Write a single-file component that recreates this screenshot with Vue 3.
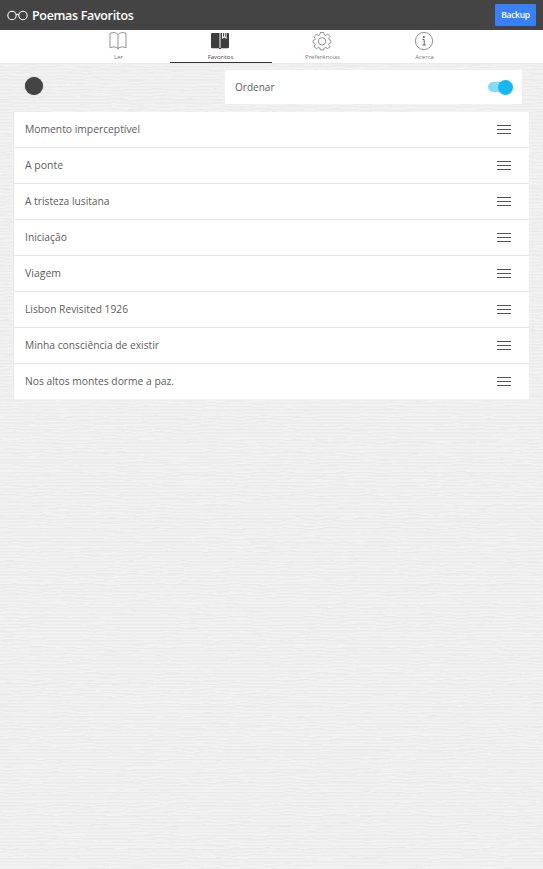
<script setup>
import { ref } from 'vue'

const sorting = ref(true)
const active = ref('Favoritos')
const tabs = ['Ler', 'Favoritos', 'Preferências', 'Acerca']
const poems = [
  { title: 'Momento imperceptível', width: 115 },
  { title: 'A ponte', width: 38 },
  { title: 'A tristeza lusitana', width: 84.5 },
  { title: 'Iniciação', width: 42 },
  { title: 'Viagem', width: 36 },
  { title: 'Lisbon Revisited 1926', width: 103 },
  { title: 'Minha consciência de existir', width: 134 },
  { title: 'Nos altos montes dorme a paz.', width: 149 },
]
</script>

<template>
  <div class="page">
    <svg class="texture" width="100%" height="100%" aria-hidden="true">
      <defs>
        <pattern id="lines" width="20" height="3.300" patternUnits="userSpaceOnUse">
          <rect width="20" height="3.300" fill="#f2f2f2" />
          <rect width="20" height="1.300" fill="#eaeaea" />
        </pattern>
        <filter id="paper" x="0" y="0" width="100%" height="100%" color-interpolation-filters="sRGB">
          <feTurbulence type="fractalNoise" baseFrequency="0.04 0.13" numOctaves="2" seed="8" result="noise" />
          <feDisplacementMap in="SourceGraphic" in2="noise" scale="4" xChannelSelector="R" yChannelSelector="G" />
        </filter>
      </defs>
      <rect y="-10" width="100%" height="900" fill="url(#lines)" filter="url(#paper)" />
    </svg>

    <header class="header">
      <svg class="glasses" viewBox="0 0 21 11" width="21" height="11">
        <circle cx="5" cy="5.5" r="4.2" /><circle cx="16" cy="5.5" r="4.2" />
        <path d="M9 4.7q1.5-1 3 0" />
      </svg>
      <h1>Poemas Favoritos</h1>
      <button class="backup">Backup</button>
    </header>

    <nav class="tabs">
      <a v-for="tab in tabs" :key="tab" class="tab" :class="{ active: active === tab }" @click="active = tab">
        <svg v-if="tab === 'Ler'" class="icon" viewBox="0 0 20 20">
          <path d="M10 3.7C8.500 1.300 4.500 1 2 2.400v14.400c2.500-1.400 6.500-1 8 .7 1.500-1.700 5.500-2.100 8-.7V2.400C15.500 1 11.500 1.300 10 3.700zV18.500" />
        </svg>
        <svg v-else-if="tab === 'Favoritos'" class="icon solid" viewBox="0 0 20 20">
          <path d="M2 2h7.500v15.300H2q-1-.1-1-1V3q0-1 1-1zM10.500 2H12v6l2.300-1.500L16.600 8V2H18q1 0 1 1v13.300q0 1-1 1h-7.500z" />
          <path d="M13 2h.9v3.400l-.9.600zM14.800 2h.9v4l-.9-.6zM9 17h2v1H9z" />
        </svg>
        <svg v-else-if="tab === 'Preferências'" class="icon" viewBox="0 0 20 20">
          <path d="M8.300 1.500h3.400l.5 2.400 1.400.6 2-1.300L18 5.600l-1.300 2 .6 1.300 1.500.3v2.700l-1.500.4-.6 1.400L18 15.700 15.600 17.600l-2-1.200-1.400.6-.5 1.900H8.300l-.5-1.900-1.400-.6-2 1.200L2 15.700l1.300-2-.6-1.400-1.500-.4V9.200L2.700 8.900 3.300 7.600 2 5.600l2.400-2.400 2 1.300 1.400-.6z" />
          <circle cx="10" cy="10.300" r="3.700" />
        </svg>
        <svg v-else class="icon" viewBox="0 0 20 20">
          <circle cx="10" cy="10" r="8.600" />
          <path class="letter" d="M8.500 8.500h1.700v5.500M8.300 14h3.600" />
          <circle class="dot" cx="9.900" cy="6" r=".9" />
        </svg>
        <span>{{ tab }}</span>
      </a>
    </nav>

    <section class="toolbar">
      <i class="disc"></i>
      <div class="sort">
        <svg class="title" height="20" width="60">
          <text x="0" y="14" textLength="39.500" lengthAdjust="spacingAndGlyphs">Ordenar</text>
        </svg>
        <button class="switch" :class="{ on: sorting }" aria-label="Ordenar" @click="sorting = !sorting"><i></i></button>
      </div>
    </section>

    <ul class="list">
      <li v-for="poem in poems" :key="poem.title">
        <svg class="title" height="20" width="260">
          <text x="0" y="13" :textLength="poem.width" lengthAdjust="spacingAndGlyphs">{{ poem.title }}</text>
        </svg>
        <svg class="handle" viewBox="0 0 14 10" width="14" height="10">
          <path d="M0 .5h14M0 4.500h14M0 8.500h14" />
        </svg>
      </li>
    </ul>
  </div>
</template>

<style>
body { margin: 0; background: #eee; }
</style>

<style scoped>
.page { position: relative; isolation: isolate; height: 869px; overflow: hidden; font-family: "Open Sans", "Noto Sans", sans-serif; color: #555; }
.texture { position: absolute; inset: 0; z-index: -1; }
.header { display: flex; align-items: center; height: 30px; box-sizing: border-box; padding: 1px 7px 0; background: #444; color: #fff; }
.glasses { fill: none; stroke: #fff; stroke-width: 1.1; }
h1 { flex: 1; margin: 0 0 0 4px; font-size: 12.5px; line-height: 20px; font-weight: 600; letter-spacing: -0.33px; }
.backup { width: 41px; height: 22px; margin-top: -1px; padding: 0 0 1px; border: 0; border-radius: 1px; background: #3880f6; color: #fff; font: 600 8.5px "Open Sans", sans-serif; letter-spacing: -0.3px; }
.tabs { display: flex; justify-content: center; height: 33px; background: #fff; box-shadow: 0 1px 1px #e9e9e9; }
.tab { display: flex; flex-direction: column; align-items: center; box-sizing: border-box; width: 102px; padding-top: 1px; border-bottom: 1px solid transparent; color: #777; }
.tab.active { border-bottom-color: #333; color: #444; }
.tab span { font-size: 6px; line-height: 8px; margin-top: 2px; }
.icon { width: 20px; height: 20px; margin-right: 1px; fill: none; stroke: #666; stroke-width: .7; }
.solid { fill: #3d3d3d; stroke: none; }
.letter { stroke-width: 1; }
.dot { fill: #444; stroke: none; }
.toolbar { display: flex; justify-content: space-between; padding: 7px 21px 0 25px; }
.disc { width: 18px; height: 18px; margin-top: 7px; border-radius: 50%; background: #444; box-shadow: 0 0 1px #777; }
.sort { display: flex; align-items: center; justify-content: space-between; box-sizing: border-box; width: 297px; height: 34px; padding: 0 9px 0 10px; background: #fff; }
.switch { display: flex; align-items: center; width: 25px; height: 10px; padding: 0; border: 0; border-radius: 5px; background: #ccc; }
.switch i { width: 15px; height: 15px; flex: none; border-radius: 50%; background: #999; }
.switch.on { justify-content: flex-end; background: #83dcf5; }
.switch.on i { background: #17b9ed; }
.list { list-style: none; width: 515px; margin: 8px 0 0 13px; padding: 0; border-left: 1px solid #e9e9e9; background: #fff; }
li { display: flex; align-items: center; justify-content: space-between; height: 36px; box-sizing: border-box; padding: 0 18px 0 11px; border-bottom: 1px solid #e6e6e6; }
li:last-child { border-bottom-color: #f3f3f3; }
.title { font-size: 11.5px; fill: #5c5c5c; }
.handle { margin-top: 1px; stroke: #555; stroke-width: 1.2; }
</style>
